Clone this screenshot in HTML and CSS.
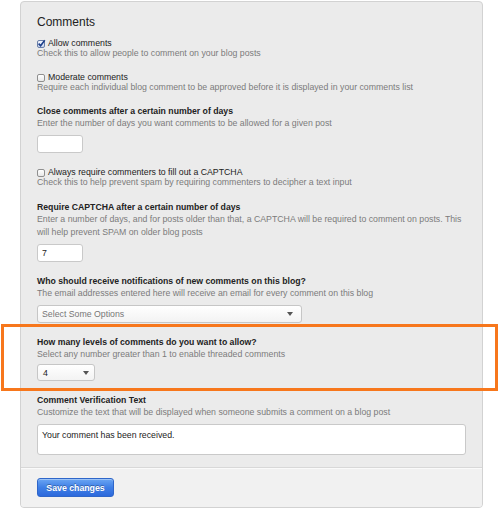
FILE: index.html
```html
<!DOCTYPE html>
<html>
<head>
<meta charset="utf-8">
<link rel="stylesheet" href="styles.css">
</head>
<body>
<div class="page">
  <form class="panel">
    <div class="panel-body">
      <h2 class="title">Comments</h2>

      <div class="field check-field">
        <label class="check-label"><span class="box checked"><svg viewBox="0 0 9 9" width="9" height="9"><path d="M1.6 4.6 L3.6 6.8 L7.8 1.2" fill="none" stroke="#1d3f8a" stroke-width="1.6"/></svg></span>Allow comments</label>
        <div class="desc">Check this to allow people to comment on your blog posts</div>
      </div>

      <div class="field check-field">
        <label class="check-label"><span class="box"></span>Moderate comments</label>
        <div class="desc">Require each individual blog comment to be approved before it is displayed in your comments list</div>
      </div>

      <div class="field">
        <div class="label">Close comments after a certain number of days</div>
        <div class="desc desc-text">Enter the number of days you want comments to be allowed for a given post</div>
        <div class="text-input"></div>
      </div>

      <div class="field check-field">
        <label class="check-label"><span class="box"></span>Always require commenters to fill out a CAPTCHA</label>
        <div class="desc">Check this to help prevent spam by requiring commenters to decipher a text input</div>
      </div>

      <div class="field field-loose">
        <div class="label">Require CAPTCHA after a certain number of days</div>
        <div class="desc desc-text">Enter a number of days, and for posts older than that, a CAPTCHA will be required to comment on posts. This will help prevent SPAM on older blog posts</div>
        <div class="text-input">7</div>
      </div>

      <div class="field">
        <div class="label">Who should receive notifications of new comments on this blog?</div>
        <div class="desc desc-text">The email addresses entered here will receive an email for every comment on this blog</div>
        <div class="select select-wide"><span class="placeholder">Select Some Options</span><span class="arrow"></span></div>
      </div>

      <div class="field">
        <div class="label">How many levels of comments do you want to allow?</div>
        <div class="desc desc-text">Select any number greater than 1 to enable threaded comments</div>
        <div class="select select-small"><span>4</span><span class="arrow"></span></div>
      </div>

      <div class="field">
        <div class="label">Comment Verification Text</div>
        <div class="desc desc-text">Customize the text that will be displayed when someone submits a comment on a blog post</div>
        <div class="textarea">Your comment has been received.</div>
      </div>
    </div>
    <div class="panel-footer">
      <button type="button" class="btn">Save changes</button>
    </div>
  </form>
  <div class="highlight"></div>
</div>
</body>
</html>
```

FILE: styles.css
```css
html, body {
  margin: 0;
  padding: 0;
  background: #ffffff;
}
body {
  font-family: "Liberation Sans", Arial, sans-serif;
  font-size: 8.75px;
  color: #222;
}
.page {
  position: relative;
  width: 499px;
  height: 511px;
  overflow: hidden;
}
.panel {
  margin: 1px 0 0 20px;
  width: 463px;
  box-sizing: border-box;
  border: 1px solid #d2d2d2;
  border-radius: 4px;
  background: #ebebeb;
  overflow: hidden;
}
.panel-body {
  padding: 12px 17px 12px 16px;
}
.title {
  margin: 0 0 7px 0;
  font-size: 12px;
  font-weight: normal;
  line-height: 16px;
  color: #222;
}
.field {
  margin-bottom: 13px;
}
.field:last-child {
  margin-bottom: 0;
}
.field-loose {
  padding-top: 1px;
}
.check-field {
  padding-top: 2px;
  margin-bottom: 12px;
}
.check-label {
  display: flex;
  align-items: center;
  line-height: 9px;
  height: 9px;
  color: #222;
}
.box {
  width: 8px;
  height: 8px;
  box-sizing: border-box;
  border: 1px solid #8f8f8f;
  border-radius: 2px;
  background: linear-gradient(#ffffff, #e8e8e8);
  margin-right: 3px;
  position: relative;
  flex: none;
}
.box.checked {
  border-color: #6a7fa8;
  background: linear-gradient(#f4f7ff, #c9d6ee);
}
.box svg {
  position: absolute;
  left: -1px;
  top: -2px;
}
.desc {
  color: #7b7b7b;
  line-height: 11px;
}
.desc-text {
  line-height: 13px;
}
.label {
  font-weight: bold;
  font-size: 8.7px;
  line-height: 12px;
  color: #222;
}
.text-input {
  margin-top: 5px;
  width: 46px;
  height: 18px;
  box-sizing: border-box;
  border: 1px solid #c9c9c9;
  border-radius: 3px;
  background: #fff;
  padding: 0 4px;
  line-height: 16px;
  color: #222;
}
.select {
  margin-top: 5px;
  height: 18px;
  box-sizing: border-box;
  border: 1px solid #c6c6c6;
  border-radius: 3px;
  background: linear-gradient(#ffffff, #f3f3f3);
  display: flex;
  align-items: center;
  justify-content: space-between;
  color: #222;
}
.select-wide {
  width: 265px;
  padding: 0 8px 0 4px;
}
.select-small {
  margin-top: 3px;
  width: 58px;
  height: 17px;
  padding: 0 5px 0 5px;
}
.placeholder {
  color: #777;
}
.arrow {
  width: 0;
  height: 0;
  border-left: 3px solid transparent;
  border-right: 3px solid transparent;
  border-top: 4px solid #555;
}
.textarea {
  margin-top: 5px;
  width: 429px;
  height: 31px;
  box-sizing: border-box;
  border: 1px solid #c9c9c9;
  border-radius: 3px;
  background: #fff;
  padding: 4px 4px;
  line-height: 12px;
  color: #222;
}
.panel-footer {
  border-top: 1px solid #d8d8d8;
  background: #f1f1f1;
  padding: 10px 16px 10px 16px;
  box-shadow: inset 0 1px 0 #fafafa;
}
.btn {
  display: block;
  width: 77px;
  height: 19px;
  margin: 0;
  padding: 0;
  border: 1px solid #2f66c9;
  border-radius: 3px;
  background: linear-gradient(#6aa5f3, #3f7fe6 50%, #2c69dc);
  color: #fff;
  font-family: "Liberation Sans", Arial, sans-serif;
  font-size: 8.75px;
  font-weight: bold;
  text-shadow: 0 -1px 0 rgba(0, 0, 0, 0.3);
  box-shadow: inset 0 1px 0 rgba(255, 255, 255, 0.35);
}
.highlight {
  position: absolute;
  left: 1px;
  top: 324px;
  width: 497px;
  height: 67px;
  box-sizing: border-box;
  border: 3px solid #f7771c;
  pointer-events: none;
}
```
